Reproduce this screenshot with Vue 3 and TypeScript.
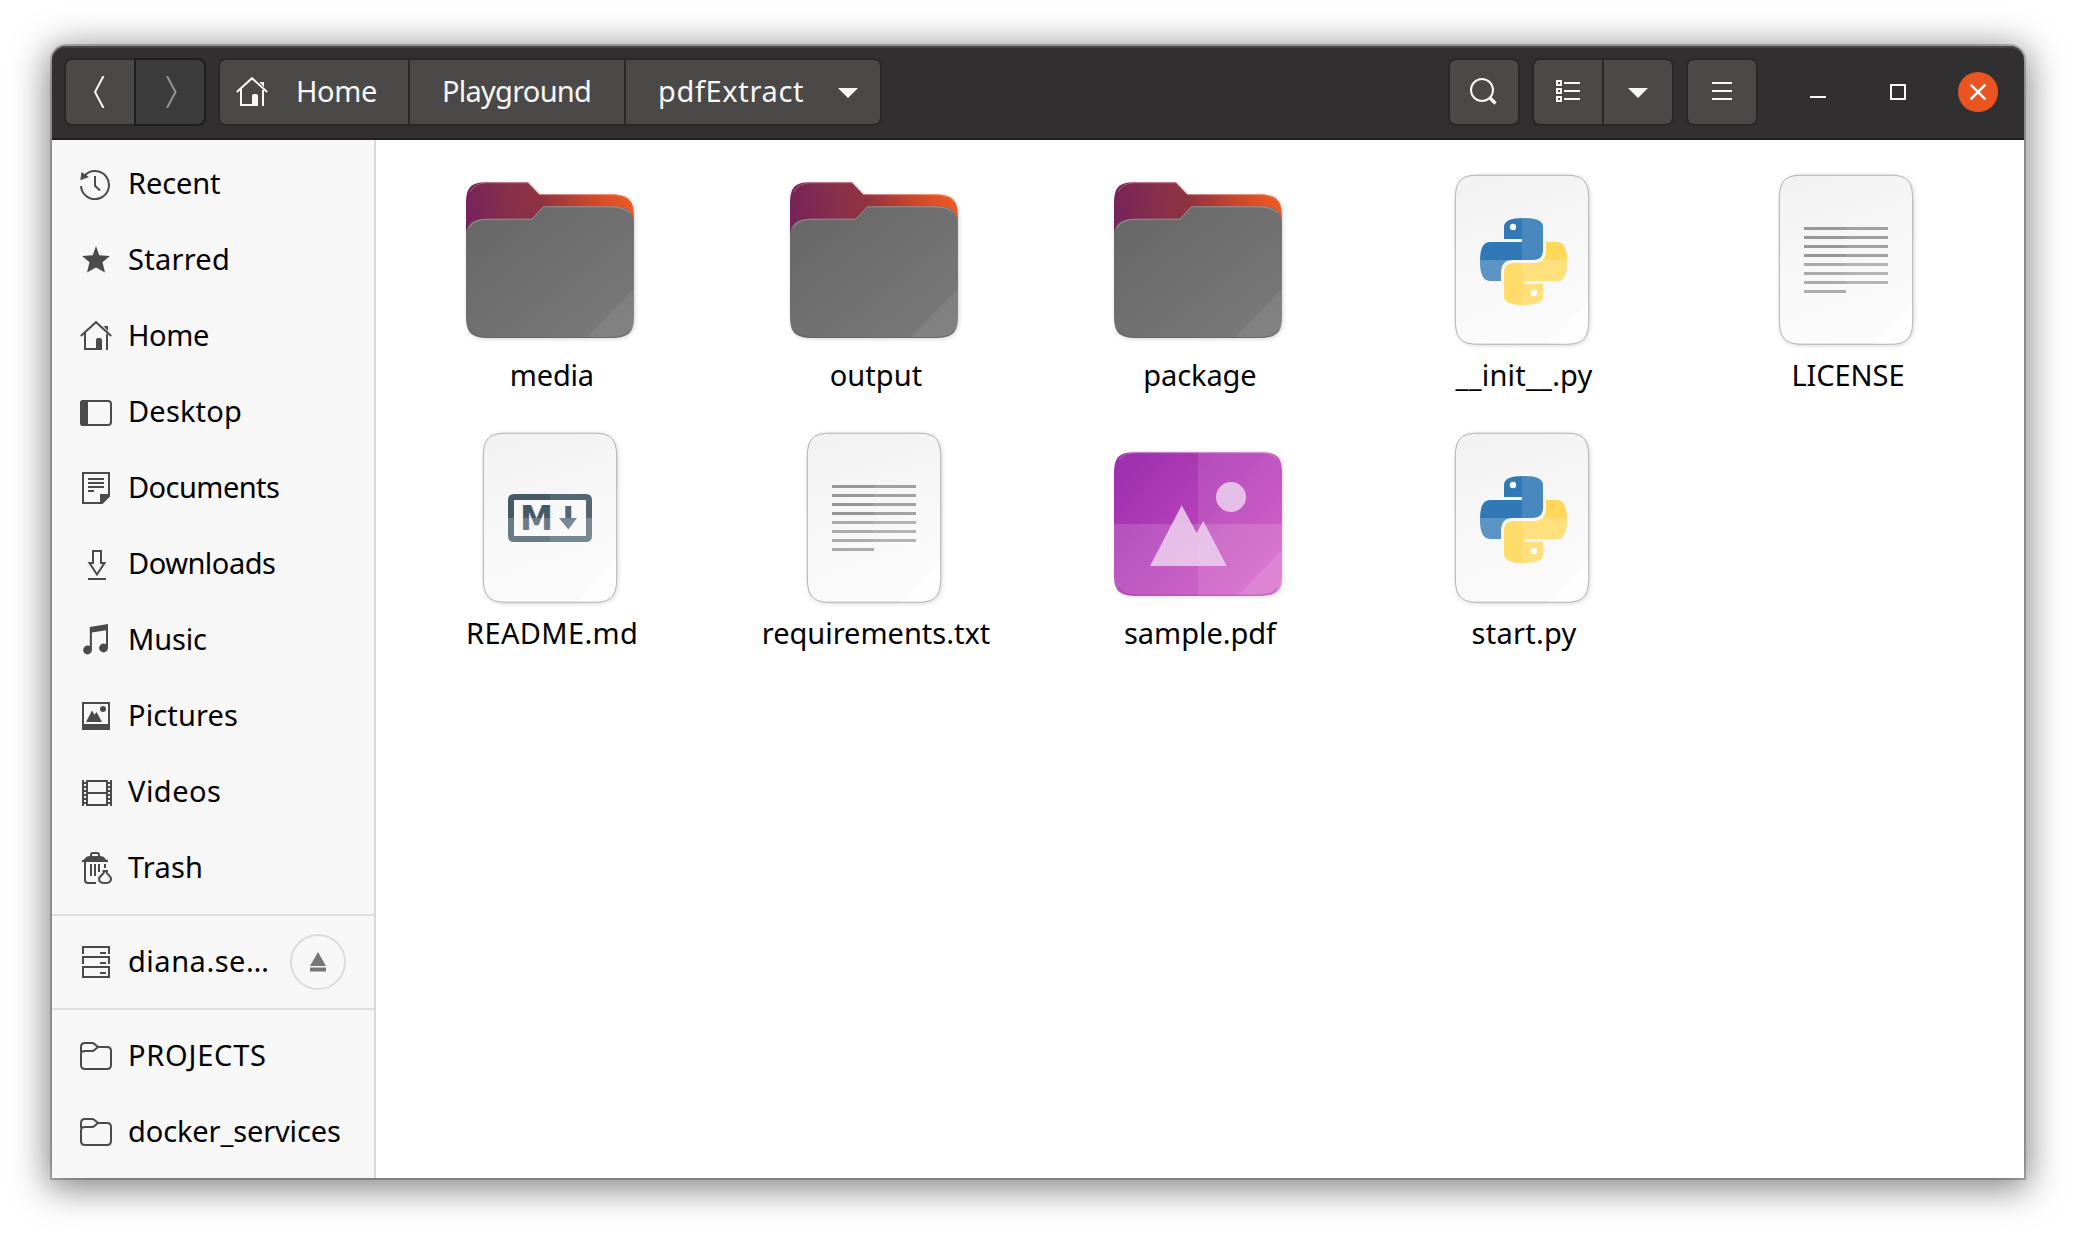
<script setup lang="ts">
interface Label {
  text: string
  width: number
}
interface Place extends Label {
  icon: string
}
interface FileItem extends Label {
  kind: 'folder' | 'python' | 'text' | 'markdown' | 'image'
}

const places: Place[] = [
  { icon: 'recent', text: 'Recent', width: 90 },
  { icon: 'star', text: 'Starred', width: 99 },
  { icon: 'home', text: 'Home', width: 78 },
  { icon: 'desktop', text: 'Desktop', width: 111 },
  { icon: 'documents', text: 'Documents', width: 149 },
  { icon: 'downloads', text: 'Downloads', width: 145 },
  { icon: 'music', text: 'Music', width: 76 },
  { icon: 'pictures', text: 'Pictures', width: 107 },
  { icon: 'videos', text: 'Videos', width: 92 },
  { icon: 'trash', text: 'Trash', width: 73 },
]
const bookmarks: Place[] = [
  { icon: 'folder', text: 'PROJECTS', width: 135 },
  { icon: 'folder', text: 'docker_services', width: 211 },
]
const server: Label = { text: 'diana.se…', width: 138 }
const crumbs: Label[] = [
  { text: 'Home', width: 78 },
  { text: 'Playground', width: 146 },
  { text: 'pdfExtract', width: 143 },
]
const files: FileItem[] = [
  { kind: 'folder', text: 'media', width: 80 },
  { kind: 'folder', text: 'output', width: 91 },
  { kind: 'folder', text: 'package', width: 110 },
  { kind: 'python', text: '__init__.py', width: 138 },
  { kind: 'text', text: 'LICENSE', width: 110 },
  { kind: 'markdown', text: 'README.md', width: 168 },
  { kind: 'text', text: 'requirements.txt', width: 226 },
  { kind: 'image', text: 'sample.pdf', width: 153 },
  { kind: 'python', text: 'start.py', width: 104 },
]

// Letter spacing that brings a label to its intended optical width.
const ctx = document.createElement('canvas').getContext('2d')!
ctx.font = '29px "Noto Sans", sans-serif'
function track(l: Label) {
  const m = ctx.measureText(l.text)
  const ink = m.actualBoundingBoxRight + m.actualBoundingBoxLeft
  const gap = (l.width - ink) / (l.text.length - 1)
  return { letterSpacing: gap.toFixed(3) + 'px', marginRight: (-gap).toFixed(3) + 'px' }
}

const homePath =
  'M.8 15.9 16 2.2l15.2 13.7M5 13v16h13M27 14v16'
const sheetLines = [55, 64, 73, 82, 91, 100, 109]
</script>

<template>
  <div class="desktop">
    <svg class="defs" width="0" height="0">
      <defs>
        <linearGradient id="back" gradientUnits="userSpaceOnUse" x1="6" y1="52" x2="166" y2="22">
          <stop offset="0" stop-color="#77235b" />
          <stop offset=".3" stop-color="#8a3049" />
          <stop offset=".45" stop-color="#8f3243" />
          <stop offset=".85" stop-color="#de4e26" />
          <stop offset="1" stop-color="#ee5a24" />
        </linearGradient>
        <linearGradient id="front" x1="0" y1="0" x2="1" y2="1">
          <stop offset="0" stop-color="#666" />
          <stop offset="1" stop-color="#7a7a7a" />
        </linearGradient>
        <linearGradient id="sheet" x1="0" y1="0" x2=".25" y2="1">
          <stop offset="0" stop-color="#f1f1f1" />
          <stop offset=".5" stop-color="#f7f7f7" />
          <stop offset="1" stop-color="#fbfbfb" />
        </linearGradient>
        <linearGradient id="photo" x1="0" y1="0" x2="1" y2=".8">
          <stop offset="0" stop-color="#992eae" />
          <stop offset="1" stop-color="#d04fc2" />
        </linearGradient>
        <clipPath id="pyclip">
          <path d="M252 237V200Q252 174 310.500 174T369 200V270Q369 300 339 300H278Q243 300 243 338V363H210Q180 363 180 304T210 246H306V237Z" />
          <path d="M369 372V409Q369 435 310.500 435T252 409V339Q252 309 282 309H343Q378 309 378 271V246H411Q441 246 441 305T411 363H315V372Z" />
        </clipPath>
      </defs>
    </svg>

    <div class="window">
      <header class="bar">
        <div class="group">
          <button class="btn first">
            <svg width="32" height="32" viewBox="0 0 32 32"><path d="M19.500 0 11 16l8.500 16" class="line" /></svg>
          </button>
          <button class="btn last off">
            <svg width="32" height="32" viewBox="0 0 32 32"><path d="M14.500 0 23 16l-8.500 16" class="line dim" transform="translate(-1.5 0)" /></svg>
          </button>
        </div>
        <div class="group path">
          <button class="btn first crumb home">
            <svg width="32" height="32" viewBox="0 0 32 32">
              <path :d="homePath" class="line" />
              <path d="M23.500 6H28v5ZM16 29V20q0-2 2-2h2q2 0 2 2V30H16Z" class="solid" />
            </svg>
            <span :style="track(crumbs[0])">{{ crumbs[0].text }}</span>
          </button>
          <button class="btn crumb play"><span :style="track(crumbs[1])">{{ crumbs[1].text }}</span></button>
          <button class="btn last crumb pdf">
            <span :style="track(crumbs[2])">{{ crumbs[2].text }}</span>
            <svg width="20" height="10" viewBox="0 0 20 10"><path d="M0 0h20L10 10z" class="solid" /></svg>
          </button>
        </div>
        <div class="spacer"></div>
        <div class="group tool">
          <button class="btn single">
            <svg width="32" height="32" viewBox="0 0 32 32">
              <circle cx="14" cy="14" r="11" class="line" /><path d="m21.500 21.500 6 6" class="line thick" />
            </svg>
          </button>
        </div>
        <div class="group tool">
          <button class="btn first">
            <svg width="32" height="32" viewBox="0 0 32 32">
              <path d="M5 5h4v4H5zM5 13h4v4H5zM5 21h4v4H5zM12 7h16M12 15h16M12 23h16" class="line" />
            </svg>
          </button>
          <button class="btn last">
            <svg width="20" height="10" viewBox="0 0 20 10" class="lower"><path d="M0 0h20L10 10z" class="solid" /></svg>
          </button>
        </div>
        <div class="group tool">
          <button class="btn single">
            <svg width="32" height="32" viewBox="0 0 32 32"><path d="M6 7h20M6 15h20M6 23h20" class="line" /></svg>
          </button>
        </div>
        <div class="controls">
          <svg width="40" height="40" viewBox="0 0 40 40"><path d="M12 25h16" class="line" /></svg>
          <svg width="40" height="40" viewBox="0 0 40 40"><path d="M13 13h14v14H13z" class="line" /></svg>
          <svg width="40" height="40" viewBox="0 0 40 40">
            <circle cx="20" cy="20" r="20" fill="#e95420" /><path d="m12.700 12.700 14.600 14.600M27.300 12.700 12.700 27.300" class="line cross" />
          </svg>
        </div>
      </header>

      <div class="body">
        <aside class="sidebar">
          <ul class="section">
            <li v-for="p in places" :key="p.text">
              <svg width="32" height="32" viewBox="0 0 32 32" class="sym">
                <template v-if="p.icon === 'recent'">
                  <path d="M1 18A14 14 0 1 0 4 8.400" class="line" />
                  <path d="M1.500 4 .3 12.200 9 9z" class="solid" />
                  <path d="M15 8v9.700l5 4.700" class="line" />
                </template>
                <path v-else-if="p.icon === 'star'" class="solid" d="m16 2 3.200 9.200L30 12l-7.500 6.300L25 28.500l-9-5-9 5 2.500-10.200L2 12l10.800-.8z" />
                <template v-else-if="p.icon === 'home'">
                  <path :d="homePath" class="line" />
                  <path d="M23.500 6H28v5ZM16 29V20q0-2 2-2h2q2 0 2 2V30H16Z" class="solid" />
                </template>
                <template v-else-if="p.icon === 'desktop'">
                  <rect x="1" y="5" width="30" height="24" rx="3" class="line" />
                  <path d="M3 4h5v26H3q-3 0-3-3V7q0-3 3-3z" class="solid" />
                </template>
                <template v-else-if="p.icon === 'documents'">
                  <path d="M3 1h26v23l-7 7H3zM8 7h16M8 11h16M8 15h16M8 19h6" class="line" />
                  <path d="M20 22h10v2l-8 8h-2z" class="solid" />
                </template>
                <path v-else-if="p.icon === 'downloads'" class="line" d="M13 3h8v12h3.500L17 26.500 9.500 15H13zM8 31h18" />
                <template v-else-if="p.icon === 'music'">
                  <circle cx="7.500" cy="26" r="4.400" class="solid" /><circle cx="23.500" cy="24" r="4.400" class="solid" />
                  <path class="solid" d="M9.800 3 28 0v24h-2V6.200L11.900 8.500V26h-2.100z" />
                </template>
                <template v-else-if="p.icon === 'pictures'">
                  <path d="M3 3h26v26H3z" class="line" />
                  <path class="solid" d="M2 24h28v6H2zM6 22l6-11.500 2.500 4.200 2-2.700L22 22z" />
                  <circle cx="23" cy="9" r="3" class="solid" />
                </template>
                <path v-else-if="p.icon === 'videos'" class="line" d="M3 4v26M31 4v26M7 4v26M27 4v26M8 5h18M8 17h18M8 29h18M4 7h2M4 11h2M4 15h2M4 19h2M4 23h2M4 27h2M28 7h2M28 11h2M28 15h2M28 19h2M28 23h2M28 27h2" />
                <template v-else>
                  <path class="solid" d="M2 8Q4 8 5 6.500 6 4 10 4h10q4 0 5 2.500Q26 8 28 8v2H2z" />
                  <path class="line" d="M11 5V3q0-2 2-2h4q2 0 2 2v2M5 10v18q0 3 3 3h8M11 12v12M15 12v12M19 12v8M25 12v4" />
                  <path class="line" d="M22.500 19h5.500M24 20c0 2.500-5 3.500-5 7.200 0 2.500 2.500 3.800 6 3.800s6-1.300 6-3.800C31 23.500 26.500 22.500 26.500 20" />
                </template>
              </svg>
              <span :style="track(p)">{{ p.text }}</span>
            </li>
          </ul>
          <ul class="section">
            <li>
              <svg width="32" height="32" viewBox="0 0 32 32" class="sym">
                <path class="line" d="M3 8V1h26v7M3 18v-7h26v7M3 21h26v10H3zM20 7h6M20 17h6M20 27h6" />
              </svg>
              <span :style="track(server)">{{ server.text }}</span>
              <button class="eject">
                <svg width="16" height="20" viewBox="0 0 16 20"><path d="m8 0 8 14H0zM0 15.500h16v4H0z" fill="#767676" /></svg>
              </button>
            </li>
          </ul>
          <ul class="section">
            <li v-for="p in bookmarks" :key="p.text">
              <svg width="32" height="32" viewBox="0 0 32 32" class="sym">
                <path class="line" d="M1 12V7q0-4 4-4h7q1.500 0 2.500 1L18 7h9q4 0 4 4v14q0 4-4 4H5q-4 0-4-4V14q0-3 4-3h7q1.500 0 2.500-1L18 7" />
              </svg>
              <span :style="track(p)">{{ p.text }}</span>
            </li>
          </ul>
        </aside>

        <main class="grid">
          <figure v-for="f in files" :key="f.text" class="file">
            <svg width="176" height="176" viewBox="0 0 176 176" class="art">
              <template v-if="f.kind === 'folder'">
                <g class="drop">
                  <path fill="url(#back)" d="M2 34C2 15 6 10.300 24 10.300H64L75.300 22.200H146C165 22.200 170 28 170 46V100H2Z" />
                  <path d="M6 20Q10 10.800 24 10.800H64L75.300 22.700H146Q160 22.700 166 29" fill="none" stroke="#fff" stroke-opacity=".25" />
                  <path fill="url(#front)" d="M2 66C2 52 7 46.700 24 46.700H68L79.300 34.300H146C164 34.300 170 38 170 56V144C170 161 165 166 146 166H26C7 166 2 161 2 144Z" />
                </g>
                <path d="M5 56Q9 47.200 24 47.200H68L79.300 34.800H146Q160 34.800 166 41" fill="none" stroke="#fff" stroke-opacity=".28" />
                <path d="M122.500 165.500 170 117V144C170 161 165 165.500 146 165.500Z" fill="#fff" fill-opacity=".07" />
                <path d="M6 158Q10 165.500 26 165.500H146Q162 165.500 166 158" fill="none" stroke="#6b5b55" stroke-opacity=".7" />
              </template>
              <template v-else-if="f.kind === 'image'">
                <path class="drop" fill="url(#photo)" d="M2 44C2 27 7 22.300 24 22.300H148C165 22.300 170 27 170 44V144C170 161 165 165.700 148 165.700H24C7 165.700 2 161 2 144Z" />
                <path d="M86 22.300H148C165 22.300 170 27 170 44V144C170 161 165 165.700 148 165.700H86Z" fill="#fff" fill-opacity=".1" />
                <path d="M2 94H170V144C170 161 165 165.700 148 165.700H24C7 165.700 2 161 2 144Z" fill="#fff" fill-opacity=".14" />
                <path d="M125.700 165.500 170 120V144C170 161 165 165.500 148 165.500Z" fill="#fff" fill-opacity=".12" />
                <path d="M7 30Q11 22.800 24 22.800H148Q161 22.800 165 30" fill="none" stroke="#fff" stroke-opacity=".25" />
                <path d="M7 158Q11 165.200 24 165.200H148Q161 165.200 165 158" fill="none" stroke="#6a1a70" stroke-opacity=".4" />
                <g fill="#ecd3ee" fill-opacity=".84">
                  <circle cx="119" cy="67" r="15" />
                  <path d="M38 136 69.700 75.300 84.700 103 91.300 91 114.700 136z" />
                </g>
              </template>
              <template v-else>
                <path class="drop" fill="url(#sheet)" stroke="#b0b0b0" d="M19.300 28C19.300 9 25 3.200 42 3.200H130C147 3.200 152.700 9 152.700 28V147C152.700 166 147 172.200 130 172.200H42C25 172.200 19.300 166 19.300 147Z" />
                <path d="M113 171.500 152.200 130V147C152.200 166 147 171.500 130 171.500Z" fill="#fff" fill-opacity=".5" />
                <g v-if="f.kind === 'python'" transform="translate(-16 -12) scale(.33333)">
                  <path fill="#3078b6" d="M252 237V200Q252 174 310.500 174T369 200V270Q369 300 339 300H278Q243 300 243 338V363H210Q180 363 180 304T210 246H306V237Z" />
                  <path fill="#ffd342" d="M369 372V409Q369 435 310.500 435T252 409V339Q252 309 282 309H343Q378 309 378 271V246H411Q441 246 441 305T411 363H315V372Z" />
                  <g clip-path="url(#pyclip)" fill="#fff">
                    <path d="M306 170h140v270H306z" fill-opacity=".12" />
                    <path d="M176 300h270v140H176z" fill-opacity=".21" />
                  </g>
                  <circle cx="279" cy="201" r="9.500" fill="#fff" /><circle cx="342" cy="399" r="9.500" fill="#fff" />
                </g>
                <g v-else-if="f.kind === 'text'">
                  <template v-for="y in sheetLines" :key="y">
                    <rect x="44" :y="y" width="42" height="3" :fill="y < 88 ? '#979797' : '#ababab'" />
                    <rect x="86" :y="y" width="42" height="3" :fill="y < 88 ? '#a1a1a1' : '#b3b3b3'" />
                  </template>
                  <rect x="44" y="118" width="42" height="3" fill="#ababab" />
                </g>
                <g v-else>
                  <linearGradient id="mdl" gradientUnits="userSpaceOnUse" x1="0" y1="64" x2="0" y2="112">
                    <stop offset=".5" stop-color="#455a64" /><stop offset=".5" stop-color="#6a7b83" />
                  </linearGradient>
                  <linearGradient id="mdr" gradientUnits="userSpaceOnUse" x1="0" y1="64" x2="0" y2="112">
                    <stop offset=".5" stop-color="#546771" /><stop offset=".5" stop-color="#788890" />
                  </linearGradient>
                  <path fill="url(#mdl)" d="M86 64H50Q44 64 44 70V106Q44 112 50 112H86V106H50V70H86Z" />
                  <path fill="url(#mdr)" d="M86 64H122Q128 64 128 70V106Q128 112 122 112H86V106H122V70H86ZM101.300 76H107.300V88H113L104.300 99.500 95 88H101.300Z" />
                  <text x="56" y="100" fill="url(#mdl)" class="mark" textLength="33" lengthAdjust="spacingAndGlyphs">M</text>
                </g>
              </template>
            </svg>
            <figcaption><span :style="track(f)">{{ f.text }}</span></figcaption>
          </figure>
        </main>
      </div>
    </div>
  </div>
</template>

<style>
body {
  background: #fff;
}
</style>

<style scoped>
.desktop {
  box-sizing: border-box;
  width: 2076px;
  height: 1236px;
  padding: 46px 52px 58px;
  overflow: hidden;
  font: 29px/40px 'Noto Sans', sans-serif;
  color: #000;
}
.defs {
  display: block;
}
.window {
  width: 1972px;
  height: 1132px;
  display: flex;
  flex-direction: column;
  border-radius: 14px 14px 0 0;
  background: #fff;
  box-shadow: 0 0 0 2px rgba(0, 0, 0, 0.23), 0 6px 36px 4px rgba(0, 0, 0, 0.5);
}
.bar {
  box-sizing: border-box;
  height: 94px;
  padding: 12px 26px 12px 12px;
  display: flex;
  align-items: flex-start;
  gap: 12px;
  background: #322f30;
  border-radius: 14px 14px 0 0;
  border-bottom: 2px solid #1f1d1e;
  box-shadow: inset 0 2px #474545;
}
.group {
  display: flex;
}
.btn {
  box-sizing: border-box;
  height: 68px;
  width: 70px;
  padding: 0;
  display: flex;
  align-items: center;
  justify-content: center;
  background: #4b4947;
  border: 2px solid #292727;
  border-right-width: 0;
  color: #f7f7f7;
  font: inherit;
}
.btn.first {
  border-radius: 8px 0 0 8px;
}
.btn.last {
  width: 72px;
  border-right-width: 2px;
  border-radius: 0 8px 8px 0;
}
.btn.single {
  width: 72px;
  border-right-width: 2px;
  border-radius: 8px;
}
.btn.off {
  background: #3c3b3b;
  border-color: #201f1f;
}
.btn.crumb {
  justify-content: flex-start;
}
.btn.crumb span {
  position: relative;
  top: -1px;
}
.btn.home {
  width: 190px;
  padding-left: 16px;
  gap: 28px;
}
.btn.play {
  width: 216px;
  padding-left: 32px;
}
.btn.pdf {
  width: 258px;
  padding-left: 32px;
  padding-right: 22px;
  justify-content: space-between;
}
.btn.pdf svg,
.lower {
  position: relative;
  top: 1px;
}
.spacer {
  flex: 1;
}
.controls {
  display: flex;
  gap: 40px;
  margin: 14px 0 0 28px;
}
.line {
  fill: none;
  stroke: #f7f7f7;
  stroke-width: 2;
}
.line.dim {
  stroke: #969594;
}
.line.thick {
  stroke-width: 3.2;
}
.line.cross {
  stroke: #fff;
  stroke-width: 2.6;
}
.solid {
  fill: #f7f7f7;
}
.sym .line {
  stroke: #4a4a4a;
}
.sym .solid {
  fill: #4a4a4a;
}
.body {
  flex: 1;
  display: flex;
}
.sidebar {
  width: 322px;
  border-right: 2px solid #d9d9d9;
  background: #f7f7f7;
  padding-top: 6px;
}
.section {
  list-style: none;
  margin: 0;
  padding: 0 0 8px;
}
.section + .section {
  border-top: 2px solid #dedede;
  padding-top: 8px;
}
.section:last-child {
  padding-bottom: 0;
}
.section li {
  height: 76px;
  display: flex;
  align-items: center;
  padding: 0 28px;
}
.section span {
  margin-left: 16px;
  white-space: nowrap;
  position: relative;
  top: -1px;
}
.eject {
  box-sizing: border-box;
  width: 56px;
  height: 56px;
  flex: none;
  margin-left: auto;
  padding: 0;
  border: 2px solid #dcdcdc;
  border-radius: 50%;
  background: transparent;
  display: flex;
  align-items: center;
  justify-content: center;
}
.grid {
  flex: 1;
  display: grid;
  grid-template-columns: repeat(5, 324px);
  grid-auto-rows: 258px;
  align-content: start;
  padding: 32px 0 0 14px;
}
.file {
  margin: 0;
  display: flex;
  flex-direction: column;
  align-items: center;
}
.art {
  overflow: visible;
  flex: none;
}
.drop {
  filter: drop-shadow(1px 1px 2px rgba(0, 0, 0, 0.16));
}
.mark {
  font: bold 33px 'DejaVu Sans', sans-serif;
}
figcaption {
  margin-top: 7px;
  height: 40px;
  white-space: nowrap;
}
</style>
